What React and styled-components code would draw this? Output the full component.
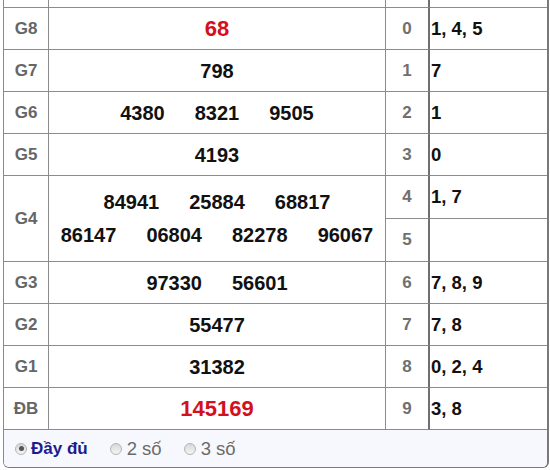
import React from 'react';
import styled, { createGlobalStyle } from 'styled-components';

const GlobalStyle = createGlobalStyle`
  html, body {
    margin: 0;
    padding: 0;
    background: #fff;
  }
  body {
    font-family: "Liberation Sans", Arial, sans-serif;
  }
`;

const Panel = styled.div`
  margin-left: 3px;
  width: 543px;
  border-left: 1px solid #8a8a8a;
  border-right: 2px solid #7a7a7a;
  border-bottom: 1px solid #7a7a7a;
  border-radius: 0 0 6px 6px;
  overflow: hidden;
`;

const Board = styled.div`
  display: grid;
  grid-template-columns: 45px 337px 44px 1fr;
  grid-template-rows: 8px repeat(4, 42px) 43px 43px repeat(4, 42px);
`;

const Cell = styled.div`
  box-sizing: border-box;
  border-bottom: 1px solid #8c8c8c;
  border-right: ${p => (p.$last ? 'none' : p.$thick ? '2px solid #6f6f6f' : '1px solid #8c8c8c')};
  grid-row: ${p => (p.$span ? `span ${p.$span}` : 'auto')};
  display: flex;
  align-items: center;
`;

const Label = styled(Cell)`
  justify-content: center;
  color: #666;
  font-weight: bold;
  font-size: 17px;
`;

const Prize = styled(Cell)`
  flex-direction: column;
  justify-content: center;
  gap: 13px;
`;

const NumberLine = styled.div`
  display: flex;
  justify-content: center;
  gap: 30px;
`;

const Num = styled.span`
  font-weight: bold;
  font-size: ${p => (p.$red ? '22px' : '20px')};
  color: ${p => (p.$red ? '#d3101c' : '#111')};
  line-height: 1;
`;

const Head = styled(Cell)`
  justify-content: center;
  color: #707070;
  font-weight: bold;
  font-size: 17px;
`;

const Tail = styled(Cell)`
  padding-left: 1px;
  color: #111;
  font-weight: bold;
  font-size: 18.5px;
`;

const Footer = styled.div`
  height: 37px;
  background: #f7f8fd;
  display: flex;
  align-items: center;
  padding-left: 11px;
  gap: 22px;
`;

const Option = styled.label`
  display: flex;
  align-items: center;
  gap: ${p => (p.$active ? '4px' : '5px')};
  font-size: ${p => (p.$active ? '17px' : '18.5px')};
  font-weight: ${p => (p.$active ? 'bold' : 'normal')};
  color: ${p => (p.$active ? '#1c1c8f' : '#6a6a6a')};
`;

const Radio = styled.span`
  box-sizing: border-box;
  width: 12px;
  height: 12px;
  border-radius: 50%;
  border: 1px solid #b4b4b4;
  background: linear-gradient(#d8d8d8, #f4f4f4);
  display: flex;
  align-items: center;
  justify-content: center;

  &::after {
    content: '';
    width: 5px;
    height: 5px;
    border-radius: 50%;
    background: ${p => (p.$checked ? '#555' : 'transparent')};
  }
`;

const prizes = [
  { name: 'G8', lines: [['68']], red: true },
  { name: 'G7', lines: [['798']] },
  { name: 'G6', lines: [['4380', '8321', '9505']] },
  { name: 'G5', lines: [['4193']] },
  { name: 'G4', lines: [['84941', '25884', '68817'], ['86147', '06804', '82278', '96067']], span: 2 },
  { name: 'G3', lines: [['97330', '56601']] },
  { name: 'G2', lines: [['55477']] },
  { name: 'G1', lines: [['31382']] },
  { name: 'ĐB', lines: [['145169']], red: true },
];

const heads = ['1, 4, 5', '7', '1', '0', '1, 7', '', '7, 8, 9', '7, 8', '0, 2, 4', '3, 8'];

const App = () => {
  const cells = [
    <Cell key="s1" />,
    <Cell key="s2" />,
    <Cell key="s3" $thick />,
    <Cell key="s4" $last />,
  ];
  let h = 0;
  const pushHead = () => {
    cells.push(
      <Head key={`h${h}`} $thick>
        {h}
      </Head>,
      <Tail key={`t${h}`} $last>
        {heads[h]}
      </Tail>,
    );
    h += 1;
  };

  prizes.forEach(prize => {
    cells.push(
      <Label key={prize.name} $span={prize.span}>
        {prize.name}
      </Label>,
      <Prize key={`${prize.name}v`} $span={prize.span}>
        {prize.lines.map((line, i) => (
          <NumberLine key={i}>
            {line.map(n => (
              <Num key={n} $red={prize.red}>
                {n}
              </Num>
            ))}
          </NumberLine>
        ))}
      </Prize>,
    );
    pushHead();
    if (prize.span === 2) pushHead();
  });

  return (
    <>
      <GlobalStyle />
      <Panel>
        <Board>{cells}</Board>
        <Footer>
          <Option $active>
            <Radio $checked />
            Đầy đủ
          </Option>
          <Option>
            <Radio />2 số
          </Option>
          <Option>
            <Radio />3 số
          </Option>
        </Footer>
      </Panel>
    </>
  );
};

export default App;
